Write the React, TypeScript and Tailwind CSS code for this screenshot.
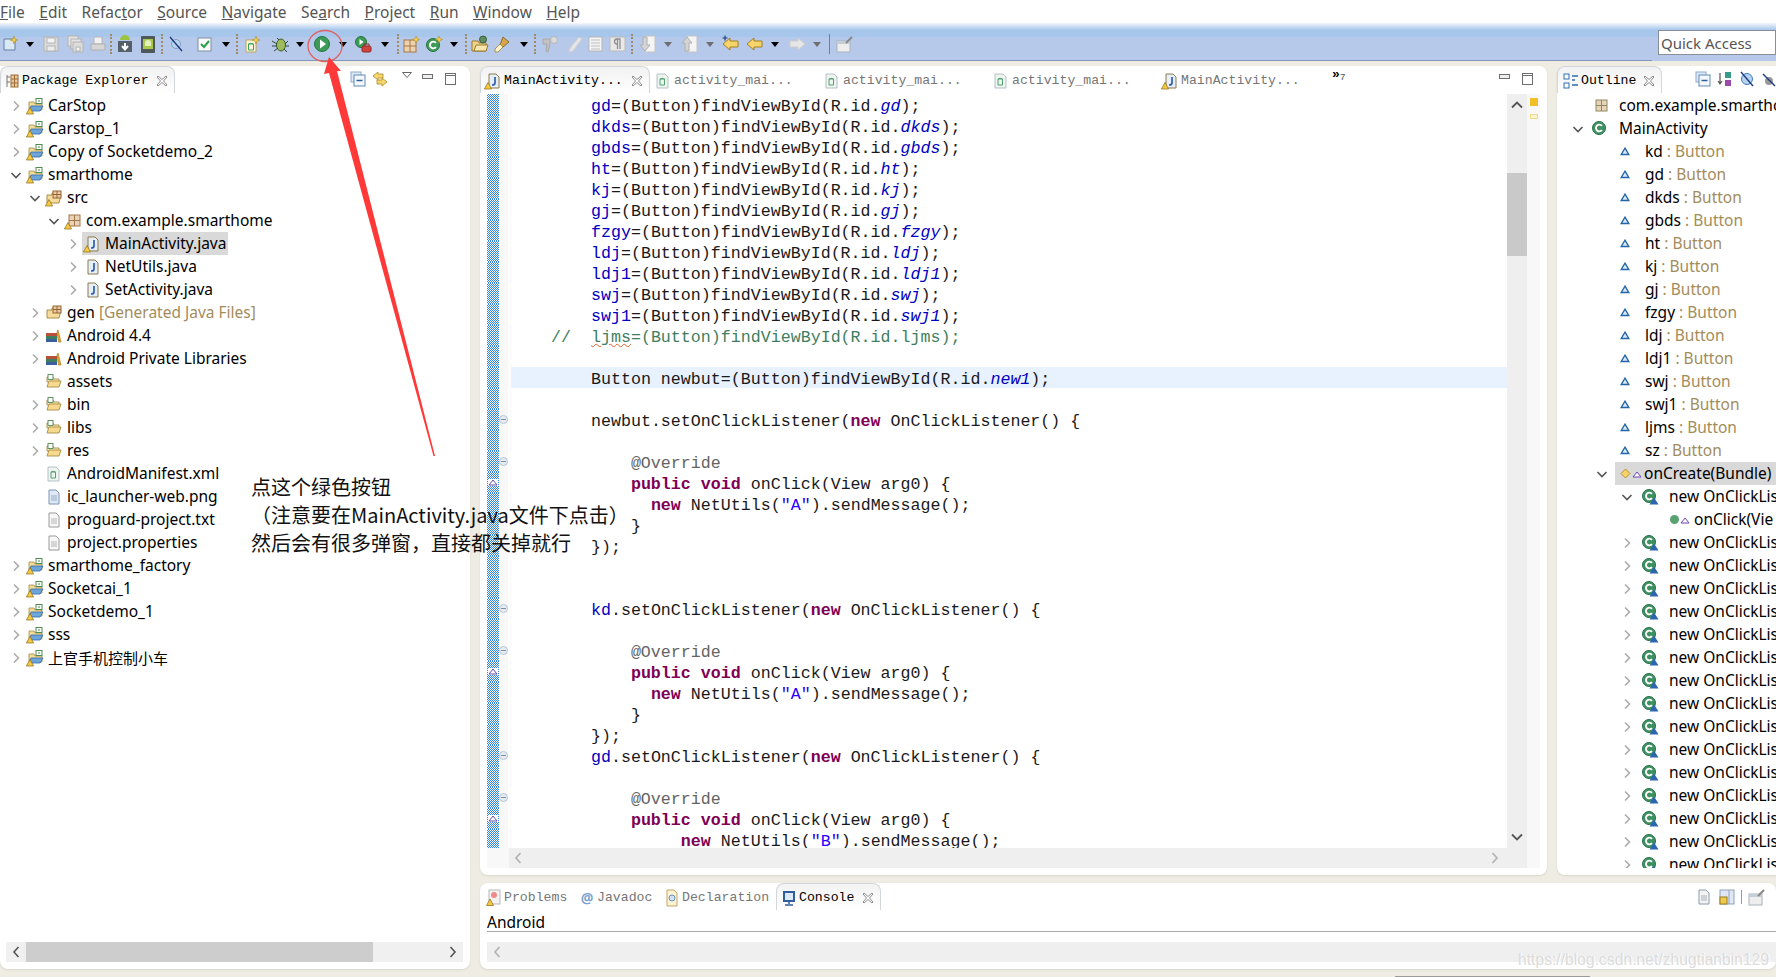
import { ReactNode } from 'react';

const sans = 'font-["Noto_Sans",sans-serif]';
const mono = 'font-["Liberation_Mono",monospace]';

function Warn() {
  return <path d="M4 10.5l3.6 6.5H.4z" fill="#f6c945" stroke="#8a6a10" strokeWidth="0.7" />;
}

function Svg({ children, w = 18, h = 18 }: { children: ReactNode; w?: number; h?: number }) {
  return (
    <svg width={w} height={h} viewBox={`0 0 ${w} ${h}`} className="block shrink-0">
      {children}
    </svg>
  );
}

function ProjectIcon({ warn = true }: { warn?: boolean }) {
  return (
    <Svg>
      <path d="M3 5h5l1 2h7v6H3z" fill="#f3dc9a" stroke="#a58a3f" strokeWidth="0.8" />
      <path d="M5 9h12l-3 5H3z" fill="#6ea6dc" stroke="#2e6aa8" strokeWidth="0.8" />
      <rect x="10" y="1.5" width="6" height="5" fill="#fff" stroke="#4f8a4f" strokeWidth="1" />
      <path d="M12 4h2" stroke="#4f8a4f" />
      {warn && <Warn />}
    </Svg>
  );
}

function PackageIcon({ warn = false, color = '#a5764a' }: { warn?: boolean; color?: string }) {
  return (
    <Svg>
      <rect x="5" y="3" width="11" height="11" fill="#e9d3b8" stroke={color} />
      <path d="M10.5 3v11M5 8.5h11" stroke={color} />
      {warn && <Warn />}
    </Svg>
  );
}

function SrcFolderIcon({ warn = true }: { warn?: boolean }) {
  return (
    <Svg>
      <path d="M2 6h5v-2h5v2h4l-2 8H2z" fill="#f6dc9c" stroke="#a4823a" strokeWidth="0.9" />
      <rect x="8" y="2" width="8" height="7" fill="#e9c9a0" stroke="#8c5a2b" strokeWidth="0.9" />
      <path d="M12 2v7M8 5.5h8" stroke="#8c5a2b" strokeWidth="0.9" />
      {warn && <Warn />}
    </Svg>
  );
}

function FolderIcon() {
  return (
    <Svg>
      <path d="M2 4h6l1 2h5v3H2z" fill="#fbe9b7" stroke="#a88d45" strokeWidth="0.9" />
      <path d="M2 14l2-6h12l-2 6z" fill="#f6d98d" stroke="#a88d45" strokeWidth="0.9" />
      <rect x="3" y="1.5" width="5" height="5" fill="#fff" stroke="#4f8a4f" strokeWidth="0.9" />
    </Svg>
  );
}

function JavaIcon({ warn = false }: { warn?: boolean }) {
  return (
    <Svg>
      <path d="M5 2h7l3 3v11H5z" fill="#e6eefa" stroke="#8d7a4a" />
      <path d="M11 5v6q0 2-3 2" fill="none" stroke="#2f5fa8" strokeWidth="1.7" />
      {warn && <Warn />}
    </Svg>
  );
}

function XmlDocIcon() {
  return (
    <Svg>
      <path d="M3 2h8l3 3v11H3z" fill="#eef5ee" stroke="#b4c0c8" />
      <path d="M6 7h4.5v6H6zM6 7q2-1.500 4.500 0" fill="none" stroke="#55a077" />
    </Svg>
  );
}

function LibraryIcon() {
  return (
    <Svg>
      <rect x="1" y="6" width="11" height="3" fill="#b8503a" />
      <rect x="1" y="9" width="11" height="3" fill="#3e7e5c" />
      <rect x="1" y="12" width="11" height="3" fill="#3a5f9e" />
      <path d="M13 3l3 12h-2.500L12 5z" fill="#e9a92d" stroke="#9c6e12" strokeWidth="0.6" />
    </Svg>
  );
}

function PlainFile({ tint = '#dfe9f5', border = '#7d93b5' }: { tint?: string; border?: string }) {
  return (
    <Svg>
      <path d="M4 2h7l3 3v11H4z" fill={tint} stroke={border} />
      <path d="M6 8h6M6 10h6M6 12h6" stroke={border} strokeWidth="0.7" />
    </Svg>
  );
}

function ClassIcon({ big = false }: { big?: boolean }) {
  return (
    <Svg>
      <circle cx="8" cy="8" r="6.500" fill="#3d9161" stroke="#28724a" />
      <path d="M11 5.800a3.400 3.400 0 1 0 0 4.400" fill="none" stroke="#fff" strokeWidth="1.900" />
      {big && <path d="M13 9.500l4.500 7h-9z" fill="#2c66ae" />}
    </Svg>
  );
}

function FieldTri() {
  return (
    <svg width="10" height="9" viewBox="0 0 10 9" className="block">
      <path d="M5 1.200L8.800 7.500H1.200z" fill="#dbe9f8" stroke="#2466a8" strokeWidth="1.400" />
    </svg>
  );
}

function PurpleTri() {
  return (
    <svg width="10" height="7" viewBox="0 0 10 7" className="block">
      <path d="M5 1L9 6H1z" fill="#fff" stroke="#6a45b0" />
    </svg>
  );
}

function Chevron({ open }: { open?: boolean }) {
  return open ? (
    <svg width="12" height="12" viewBox="0 0 12 12" className="block shrink-0">
      <path d="M1.500 4l4.500 4.500L10.500 4" fill="none" stroke="#555" strokeWidth="1.600" />
    </svg>
  ) : (
    <svg width="12" height="12" viewBox="0 0 12 12" className="block shrink-0">
      <path d="M4 1.500L8.500 6 4 10.500" fill="none" stroke="#ababab" strokeWidth="1.600" />
    </svg>
  );
}

function CloseX() {
  return (
    <svg width="12" height="12" viewBox="0 0 12 12" className="block shrink-0">
      <path d="M2 1l4 3.500L10 1l1 1-3.500 4L11 10l-1 1-4-3.500L2 11l-1-1 3.500-4L1 2z" fill="#fff" stroke="#8f8f8f" />
    </svg>
  );
}

function MinBtn() {
  return <div className="h-[5px] w-[11px] border border-[#6d6d6d] bg-[#eee]" />;
}

function MaxBtn() {
  return (
    <div className="h-[12px] w-[11px] border border-[#6d6d6d] bg-white">
      <div className="h-[2px] border-b border-[#6d6d6d]" />
    </div>
  );
}

function CollapseIcon() {
  return (
    <Svg w={16} h={16}>
      <rect x="1" y="1" width="10" height="10" fill="#dfe9f5" stroke="#8fa9c9" />
      <rect x="4" y="4" width="11" height="11" fill="#f4f8fc" stroke="#5f8ab8" />
      <path d="M6.500 9.500h6" stroke="#2f5f98" strokeWidth="1.500" />
    </Svg>
  );
}

// toolbar icons
const Drop = ({ off }: { off?: boolean }) => (
  <svg width="8" height="5" viewBox="0 0 8 5" className="block shrink-0">
    <path d="M0 0h8L4 5z" fill={off ? '#6e6e6e' : '#000'} />
  </svg>
);

const Dots = () => <div className="h-[20px] w-[2px] border-l-2 border-dotted border-[#a08c62]" />;

const IconNew = () => (
  <Svg>
    <path d="M2 4h11v11H2z" fill="#dbe8f6" stroke="#5f7ea6" />
    <path d="M12 1l1 3 3 1-3 1-1 3-1-3-3-1 3-1z" fill="#f6cf4b" stroke="#a78514" strokeWidth="0.5" />
  </Svg>
);
const IconSave = () => (
  <Svg>
    <path d="M2 2h14v14H2z" fill="#dcdcdc" stroke="#b4b4b4" />
    <rect x="5" y="3" width="8" height="5" fill="#f4f4f4" stroke="#b4b4b4" />
    <rect x="5" y="11" width="8" height="5" fill="#ececec" stroke="#b4b4b4" />
  </Svg>
);
const IconSaveAll = () => (
  <Svg>
    <rect x="2" y="1" width="10" height="10" fill="#e4e4e4" stroke="#b4b4b4" />
    <rect x="5" y="4" width="10" height="10" fill="#e4e4e4" stroke="#b4b4b4" />
    <rect x="7" y="7" width="10" height="10" fill="#dcdcdc" stroke="#b4b4b4" />
    <rect x="10" y="12" width="4" height="4" fill="#f3f3f3" stroke="#b4b4b4" />
  </Svg>
);
const IconPrint = () => (
  <Svg>
    <rect x="5" y="2" width="8" height="7" fill="#f1f1f1" stroke="#b8b8b8" />
    <path d="M2 9h14v6H2z" fill="#d6d6d6" stroke="#b0b0b0" />
  </Svg>
);
const IconSdk = () => (
  <Svg>
    <path d="M4 5a5 5 0 0 1 10 0z" fill="#9cc43e" />
    <rect x="2" y="6" width="14" height="11" fill="#55606a" />
    <path d="M9 8v5M6 11l3 3.500 3-3.500" fill="none" stroke="#fff" strokeWidth="2" />
  </Svg>
);
const IconAvd = () => (
  <Svg>
    <rect x="2" y="1" width="14" height="17" rx="1" fill="#51585c" />
    <rect x="4" y="4" width="10" height="10" fill="#a9c94a" />
    <path d="M6 8a3 3 0 0 1 6 0v3H6z" fill="#e4efc0" />
  </Svg>
);
const IconSkip = () => (
  <Svg>
    <circle cx="9" cy="9" r="4.500" fill="#b9d3ee" stroke="#7f9fc4" />
    <path d="M3 2l12 14" stroke="#1d3d80" strokeWidth="1.400" />
  </Svg>
);
const IconTask = () => (
  <Svg>
    <rect x="2" y="3" width="13" height="13" fill="#fafafa" stroke="#7c8fa5" />
    <path d="M5 9l3 3 5-6" fill="none" stroke="#29a04a" strokeWidth="2" />
  </Svg>
);
const IconXml = () => (
  <Svg>
    <path d="M3 5h10v12H3z" fill="#fff5dd" stroke="#bfa35e" />
    <path d="M5.500 9h5v6h-5zM5.500 9q2-1.500 5 0" fill="none" stroke="#3aa65c" />
    <path d="M13 1l1 3 3 1-3 1-1 3-1-3-3-1 3-1z" fill="#f6cf4b" stroke="#a78514" strokeWidth="0.5" />
  </Svg>
);
const IconBug = () => (
  <Svg>
    <ellipse cx="10" cy="10" rx="4.500" ry="6" fill="#9dbb5b" stroke="#3f5f2a" />
    <path d="M1 6l5 3M1 11h5M3 16l4-3M14 9l3-3M15 11h3M13 14l3 3M6 3l2 2" stroke="#30473a" />
  </Svg>
);
const IconRun = () => (
  <Svg>
    <circle cx="9" cy="9" r="7.500" fill="#3d9a57" stroke="#25763e" />
    <path d="M7 4.500L13 9l-6 4.500z" fill="#fff" />
  </Svg>
);
const IconExt = () => (
  <Svg>
    <circle cx="7" cy="7" r="5.500" fill="#3d9a57" stroke="#25763e" />
    <path d="M5.500 4L9.500 7l-4 3z" fill="#fff" />
    <rect x="8" y="11" width="9" height="6" rx="1.500" fill="#d0433f" stroke="#8c2a28" />
    <path d="M10 11V9h5v2" fill="none" stroke="#8c2a28" />
  </Svg>
);
const IconPkg = () => (
  <Svg>
    <rect x="2" y="5" width="12" height="12" fill="#ecd3ae" stroke="#a5764a" />
    <path d="M8 5v12M2 11h12" stroke="#a5764a" />
    <path d="M14 1l1 2.500 2.500 1-2.500 1-1 2.500-1-2.500-2.500-1 2.500-1z" fill="#f6cf4b" stroke="#a78514" strokeWidth="0.5" />
  </Svg>
);
const IconClassNew = () => (
  <Svg>
    <circle cx="8" cy="10" r="6.500" fill="#3d9a57" stroke="#25763e" />
    <path d="M11 7.800a3.400 3.400 0 1 0 0 4.400" fill="none" stroke="#fff" strokeWidth="1.900" />
    <path d="M14 1l1 2.500 2.500 1-2.500 1-1 2.500-1-2.500-2.500-1 2.500-1z" fill="#f6cf4b" stroke="#a78514" strokeWidth="0.5" />
  </Svg>
);
const IconOpen = () => (
  <Svg>
    <path d="M1 6h6l1 2h7v8H1z" fill="#f0d48a" stroke="#9b7a2c" />
    <path d="M3 16l2-6h12l-2 6z" fill="#f9e6ad" stroke="#9b7a2c" />
    <circle cx="12" cy="4.500" r="3.500" fill="#5d8e5e" stroke="#3a5f3c" />
  </Svg>
);
const IconBrush = () => (
  <Svg>
    <path d="M10 2l6 5-6 5-3-2z" fill="#d6a64a" stroke="#8c6c28" />
    <path d="M7 9l3 3-5 5H2v-3z" fill="#fff3c9" stroke="#a9924f" />
  </Svg>
);
const IconTg = () => (
  <Svg>
    <path d="M2 4h7v5l-2 8-2-1 1-7H2z" fill="#c2c2c2" stroke="#a8a8a8" />
    <circle cx="13" cy="5" r="3.500" fill="#dadada" stroke="#b6b6b6" />
  </Svg>
);
const IconPen = () => (
  <Svg>
    <path d="M13 2l3 2-9 12-4 1 1-4z" fill="#e4e4e4" stroke="#cfcfcf" />
  </Svg>
);
const IconDoc = () => (
  <Svg>
    <rect x="3" y="2" width="13" height="14" fill="#f4f4f4" stroke="#b7b7b7" />
    <path d="M5 5h9M5 8h9M5 11h9M5 14h9" stroke="#bfbfbf" />
  </Svg>
);
const IconPara = () => (
  <Svg>
    <rect x="1" y="2" width="15" height="14" fill="#e8e8e8" stroke="#bcbcbc" />
    <path d="M11 4v10M8.500 4v10M11.500 4H8a2.500 2.500 0 0 0 0 5h1" fill="none" stroke="#8f8f8f" strokeWidth="1.300" />
  </Svg>
);
const IconNext = () => (
  <Svg>
    <rect x="7" y="1" width="10" height="16" fill="#f4f4f4" stroke="#c4c4c4" />
    <path d="M5 2v8H2l5 6 5-6H9V2z" fill="#d4d4d4" stroke="#b0b0b0" />
  </Svg>
);
const IconPrev = () => (
  <Svg>
    <rect x="7" y="1" width="10" height="16" fill="#f4f4f4" stroke="#c4c4c4" />
    <path d="M5 16V8H2l5-6 5 6H9v8z" fill="#d4d4d4" stroke="#b0b0b0" />
  </Svg>
);
const ArrowY = ({ star }: { star?: boolean }) => (
  <Svg>
    <path d="M1 9l7-6v3h8v6H8v3z" fill="#f7d469" stroke="#a5801d" />
    {star && <path d="M3 0.500v5M0.500 3h5" stroke="#1d3d80" strokeWidth="1.200" />}
  </Svg>
);
const ArrowRightGray = () => (
  <Svg>
    <path d="M17 9l-7-6v3H2v6h8v3z" fill="#e6e6e6" stroke="#cdcdcd" />
  </Svg>
);
const IconPin = () => (
  <Svg>
    <rect x="1" y="6" width="13" height="11" fill="#eeeeee" stroke="#a9b2bd" />
    <path d="M1 6h13v3H1z" fill="#c5cdd6" />
    <path d="M10 8l6-6" stroke="#888" strokeWidth="2" />
  </Svg>
);

function Tab({ icon, label, active, cls }: { icon: ReactNode; label: string; active?: boolean; cls: string }) {
  return (
    <div
      className={`${cls} flex h-[27px] shrink-0 items-center pt-[2px] ${mono} text-[13.2px] ${
        active
          ? 'rounded-t-lg border-x border-t border-[#d3d7dc] bg-gradient-to-b from-[#f2f2f2] to-white text-black'
          : 'text-[#767676]'
      }`}
    >
      {icon}
      <span className="ml-[2px] whitespace-pre">{label}</span>
      {active && (
        <span className="ml-auto mr-[6px]">
          <CloseX />
        </span>
      )}
    </div>
  );
}

const labelTree = `whitespace-pre ${sans} text-[15.5px] leading-[23px] text-black`;

type TreeItem = {
  level: number;
  arrow?: 'r' | 'd';
  icon: ReactNode;
  label: string;
  suffix?: string;
  selected?: boolean;
  cjk?: boolean;
};

const levelPad = ['pl-[10px]', 'pl-[29px]', 'pl-[48px]', 'pl-[67px]'];

const treeItems: TreeItem[] = [
  { level: 0, arrow: 'r', icon: <ProjectIcon />, label: 'CarStop' },
  { level: 0, arrow: 'r', icon: <ProjectIcon />, label: 'Carstop_1' },
  { level: 0, arrow: 'r', icon: <ProjectIcon />, label: 'Copy of Socketdemo_2' },
  { level: 0, arrow: 'd', icon: <ProjectIcon />, label: 'smarthome' },
  { level: 1, arrow: 'd', icon: <SrcFolderIcon />, label: 'src' },
  { level: 2, arrow: 'd', icon: <PackageIcon warn />, label: 'com.example.smarthome' },
  { level: 3, arrow: 'r', icon: <JavaIcon warn />, label: 'MainActivity.java', selected: true },
  { level: 3, arrow: 'r', icon: <JavaIcon />, label: 'NetUtils.java' },
  { level: 3, arrow: 'r', icon: <JavaIcon />, label: 'SetActivity.java' },
  { level: 1, arrow: 'r', icon: <SrcFolderIcon warn={false} />, label: 'gen', suffix: ' [Generated Java Files]' },
  { level: 1, arrow: 'r', icon: <LibraryIcon />, label: 'Android 4.4' },
  { level: 1, arrow: 'r', icon: <LibraryIcon />, label: 'Android Private Libraries' },
  { level: 1, icon: <FolderIcon />, label: 'assets' },
  { level: 1, arrow: 'r', icon: <FolderIcon />, label: 'bin' },
  { level: 1, arrow: 'r', icon: <FolderIcon />, label: 'libs' },
  { level: 1, arrow: 'r', icon: <FolderIcon />, label: 'res' },
  { level: 1, icon: <XmlDocIcon />, label: 'AndroidManifest.xml' },
  { level: 1, icon: <PlainFile />, label: 'ic_launcher-web.png' },
  { level: 1, icon: <PlainFile tint="#f7f7f7" border="#9a9a9a" />, label: 'proguard-project.txt' },
  { level: 1, icon: <PlainFile tint="#f7f7f7" border="#9a9a9a" />, label: 'project.properties' },
  { level: 0, arrow: 'r', icon: <ProjectIcon />, label: 'smarthome_factory' },
  { level: 0, arrow: 'r', icon: <ProjectIcon />, label: 'Socketcai_1' },
  { level: 0, arrow: 'r', icon: <ProjectIcon />, label: 'Socketdemo_1' },
  { level: 0, arrow: 'r', icon: <ProjectIcon />, label: 'sss' },
  { level: 0, arrow: 'r', icon: <ProjectIcon />, label: '上官手机控制小车', cjk: true },
];

function TreeRow({ item }: { item: TreeItem }) {
  return (
    <div className={`flex h-[23px] items-center ${levelPad[item.level]}`}>
      <div className="w-[12px]">{item.arrow && <Chevron open={item.arrow === 'd'} />}</div>
      <div className={`ml-[3px] flex h-[23px] items-center pr-[2px] ${item.selected ? 'bg-[#d9d9d9]' : ''}`}>
        <div className="ml-[1px] w-[22px]">{item.icon}</div>
        {item.cjk ? (
          <span className='whitespace-pre font-["Noto_Sans_CJK_SC",sans-serif] text-[15px] leading-[23px] text-black'>
            {item.label}
          </span>
        ) : (
          <span className={labelTree}>
            {item.label}
            {item.suffix && <span className="text-[#a38c5c]">{item.suffix}</span>}
          </span>
        )}
      </div>
    </div>
  );
}

const btnIds = ['gd', 'dkds', 'gbds', 'ht', 'kj', 'gj', 'fzgy', 'ldj', 'ldj1', 'swj', 'swj1'];
const fieldNames = ['kd', 'gd', 'dkds', 'gbds', 'ht', 'kj', 'gj', 'fzgy', 'ldj', 'ldj1', 'swj', 'swj1', 'ljms', 'sz'];

function Kw({ children }: { children: ReactNode }) {
  return <span className="font-bold text-[#7f0055]">{children}</span>;
}
function Fld({ children }: { children: ReactNode }) {
  return <span className="text-[#0000c0]">{children}</span>;
}
function Str({ children }: { children: ReactNode }) {
  return <span className="text-[#2a00ff]">{children}</span>;
}

const listener = (name: ReactNode) => (
  <>
    {'    '}
    {name}
    .setOnClickListener(<Kw>new</Kw> OnClickListener() {'{'}
  </>
);
const overrideLine = <span className="text-[#646464]">{'        @Override'}</span>;
const publicLine = (
  <>
    {'        '}
    <Kw>public</Kw> <Kw>void</Kw> onClick(View arg0) {'{'}
  </>
);
const sendLine = (indent: string, s: string) => (
  <>
    {indent}
    <Kw>new</Kw> NetUtils(<Str>"{s}"</Str>).sendMessage();
  </>
);

type CodeLine = { text?: ReactNode; fold?: boolean; over?: boolean; current?: boolean };

const code: CodeLine[] = [
  ...btnIds.map((id) => ({
    text: (
      <>
        {'    '}
        <Fld>{id}</Fld>=(Button)findViewById(R.id.<Fld><i>{id}</i></Fld>);
      </>
    ),
  })),
  {
    text: (
      <span className="text-[#3f7f5f]">
        {'//  '}
        <span className="underline decoration-[#e0602c] decoration-wavy decoration-1">ljms</span>
        =(Button)findViewById(R.id.ljms);
      </span>
    ),
  },
  {},
  {
    current: true,
    text: (
      <>
        {'    '}Button newbut=(Button)findViewById(R.id.<Fld><i>new1</i></Fld>);
      </>
    ),
  },
  {},
  { fold: true, text: listener('newbut') },
  {},
  { fold: true, text: overrideLine },
  { over: true, text: publicLine },
  { text: sendLine('          ', 'A') },
  { text: '        }' },
  { text: '    });' },
  {},
  {},
  { fold: true, text: listener(<Fld>kd</Fld>) },
  {},
  { fold: true, text: overrideLine },
  { over: true, text: publicLine },
  { text: sendLine('          ', 'A') },
  { text: '        }' },
  { text: '    });' },
  { fold: true, text: listener(<Fld>gd</Fld>) },
  {},
  { fold: true, text: overrideLine },
  { over: true, text: publicLine },
  { text: sendLine('             ', 'B') },
];

function CodeRow({ line }: { line: CodeLine }) {
  return (
    <div className="flex h-[21px] shrink-0">
      <div className="flex w-[12px] shrink-0 items-end justify-center bg-[repeating-conic-gradient(#2f83d8_0_25%,#ffffff_0_50%)] bg-[length:2px_2px]">
        {line.over && (
          <div className="mb-[7px] bg-white">
            <PurpleTri />
          </div>
        )}
      </div>
      <div className="flex w-[9px] shrink-0 items-center justify-center bg-[#f8f8f8]">
        {line.fold && (
          <div className="-ml-[1px] flex h-[9px] w-[9px] shrink-0 items-center justify-center rounded-full border border-[#b9c6d4] bg-[#e6ecf3]">
            <div className="h-[1px] w-[5px] bg-[#7d8ea1]" />
          </div>
        )}
      </div>
      <div
        className={`ml-[3px] flex-1 whitespace-pre pl-[40px] pt-[1.5px] ${mono} text-[16.65px] leading-[21px] text-[#1a1a1a] ${
          line.current ? 'bg-[#e8f2fe]' : ''
        }`}
      >
        {line.text}
      </div>
    </div>
  );
}

function OutlineLabel({ children }: { children: ReactNode }) {
  return <span className={labelTree}>{children}</span>;
}

function NewListenerRow({ open }: { open?: boolean }) {
  return (
    <div className="flex h-[23px] shrink-0 items-center pl-[64px]">
      <div className="w-[20px] shrink-0">
        <Chevron open={open} />
      </div>
      <div className="w-[28px] shrink-0">
        <ClassIcon big />
      </div>
      <OutlineLabel>new OnClickLis</OutlineLabel>
    </div>
  );
}

export default function App() {
  const menus: [string, string, string][] = [
    ['', 'F', 'ile'],
    ['', 'E', 'dit'],
    ['Refac', 't', 'or'],
    ['', 'S', 'ource'],
    ['', 'N', 'avigate'],
    ['Se', 'a', 'rch'],
    ['', 'P', 'roject'],
    ['', 'R', 'un'],
    ['', 'W', 'indow'],
    ['', 'H', 'elp'],
  ];

  return (
    <div className="relative flex h-[977px] w-[1776px] flex-col overflow-hidden bg-[#efece3]">
      {/* menu bar */}
      <div className={`flex h-[23px] shrink-0 items-center gap-[14.500px] bg-white pt-[2px] ${sans} text-[15.500px] text-[#555]`}>
        {menus.map(([a, b, c]) => (
          <span key={a + b + c}>
            {a}
            <u>{b}</u>
            {c}
          </span>
        ))}
      </div>

      {/* toolbar */}
      <div className="flex h-[38px] shrink-0 bg-[linear-gradient(#f3f6fb_0,#a6c6ec_7px,#a6c6ec_14px,#b6c9ea_14px,#b6c9ea_100%)]">
        <div className="flex flex-1 items-center border-b border-[#7f96bd] pl-[2px] pt-[5px]">
          <IconNew />
          <div className="ml-[6px]"><Drop /></div>
          <div className="ml-[8px]"><IconSave /></div>
          <div className="ml-[6px]"><IconSaveAll /></div>
          <div className="ml-[5px]"><IconPrint /></div>
          <div className="ml-[3px]"><Dots /></div>
          <div className="ml-[4px]"><IconSdk /></div>
          <div className="ml-[5px]"><IconAvd /></div>
          <div className="ml-[4px]"><Dots /></div>
          <div className="ml-[4px]"><IconSkip /></div>
          <div className="ml-[11px]"><IconTask /></div>
          <div className="ml-[8px]"><Drop /></div>
          <div className="ml-[6px]"><Dots /></div>
          <div className="ml-[5px]"><IconXml /></div>
          <div className="ml-[10px]"><IconBug /></div>
          <div className="ml-[7px]"><Drop /></div>
          <div className="ml-[9px]"><IconRun /></div>
          <div className="ml-[8px]"><Drop /></div>
          <div className="ml-[7px]"><IconExt /></div>
          <div className="ml-[9px]"><Drop /></div>
          <div className="ml-[8px]"><Dots /></div>
          <div className="ml-[3px]"><IconPkg /></div>
          <div className="ml-[5px]"><IconClassNew /></div>
          <div className="ml-[7px]"><Drop /></div>
          <div className="ml-[7px]"><Dots /></div>
          <div className="ml-[4px]"><IconOpen /></div>
          <div className="ml-[4px]"><IconBrush /></div>
          <div className="ml-[9px]"><Drop /></div>
          <div className="ml-[6px]"><Dots /></div>
          <div className="ml-[5px]"><IconTg /></div>
          <div className="ml-[7px]"><IconPen /></div>
          <div className="ml-[2px]"><IconDoc /></div>
          <div className="ml-[5px]"><IconPara /></div>
          <div className="ml-[4px]"><Dots /></div>
          <div className="ml-[5px]"><IconNext /></div>
          <div className="ml-[8px]"><Drop off /></div>
          <div className="ml-[8px]"><IconPrev /></div>
          <div className="ml-[8px]"><Drop off /></div>
          <div className="ml-[8px]"><ArrowY star /></div>
          <div className="ml-[6px]"><ArrowY /></div>
          <div className="ml-[7px]"><Drop /></div>
          <div className="ml-[9px]"><ArrowRightGray /></div>
          <div className="ml-[7px]"><Drop off /></div>
          <div className="ml-[8px] h-[20px] w-[1px] bg-[#6f7f95]" />
          <div className="ml-[6px]"><IconPin /></div>
        </div>
        <div className="flex w-[124px] shrink-0 items-start pl-[6px] pt-[7px]">
          <div className={`flex h-[25px] w-[118px] items-center border border-[#8a8f96] bg-white pl-[2px] pt-[1px] ${sans} text-[15px] text-[#555]`}>
            Quick Access
          </div>
        </div>
      </div>

      {/* workbench */}
      <div className="flex min-h-0 flex-1 gap-[10px] pb-[8px] pt-[5px]">
        {/* package explorer */}
        <div className="flex w-[470px] shrink-0 flex-col rounded-b-lg rounded-tr-lg bg-white shadow-[0_1px_2px_#d8d5cb]">
          <div className="flex h-[28px] shrink-0 items-start">
            <Tab
              cls="w-[175px] pl-[3px]"
              active
              label="Package Explorer"
              icon={
                <Svg w={16} h={16}>
                  <path d="M3 2v12M3 4h3M3 9h3" stroke="#777" />
                  <rect x="7" y="2" width="7" height="12" fill="#e9c9a0" stroke="#9c6a35" />
                  <path d="M7 6h7M7 10h7M10.500 2v12" stroke="#9c6a35" />
                </Svg>
              }
            />
            <div className="ml-auto flex items-center pr-[14px] pt-[5px]">
              <CollapseIcon />
              <div className="ml-[6px]">
                <Svg w={16} h={16}>
                  <path d="M1 5l5-4v2h5v4H6v2zM15 11l-5-4v2H5v4h5v2z" fill="#f5d66f" stroke="#b08a22" strokeWidth="0.8" />
                </Svg>
              </div>
              <div className="mb-[8px] ml-[14px]">
                <svg width="10" height="6" viewBox="0 0 10 6" className="block">
                  <path d="M.5.500h9L5 5.500z" fill="#fff" stroke="#666" />
                </svg>
              </div>
              <div className="mb-[6px] ml-[10px]"><MinBtn /></div>
              <div className="ml-[12px]"><MaxBtn /></div>
            </div>
          </div>
          <div className="min-h-0 flex-1">
            {treeItems.map((item) => (
              <TreeRow key={item.label} item={item} />
            ))}
          </div>
          <div className="mb-[7px] ml-[6px] mr-[7px] flex h-[20px] shrink-0 items-center bg-[#f0f0f0]">
            <div className="flex w-[20px] justify-center">
              <svg width="8" height="12" viewBox="0 0 8 12" className="block">
                <path d="M6.500 1L2 6l4.500 5" fill="none" stroke="#555" strokeWidth="1.600" />
              </svg>
            </div>
            <div className="h-full w-[347px] bg-[#cdcdcd]" />
            <div className="ml-auto flex w-[20px] justify-center">
              <svg width="8" height="12" viewBox="0 0 8 12" className="block">
                <path d="M1.500 1L6 6l-4.500 5" fill="none" stroke="#555" strokeWidth="1.600" />
              </svg>
            </div>
          </div>
        </div>

        {/* right column */}
        <div className="flex min-w-0 flex-1 flex-col gap-[8px]">
          <div className="flex h-[809px] shrink-0 gap-[10px]">
            {/* editor */}
            <div className="flex w-[1067px] shrink-0 flex-col rounded-b-lg rounded-t-lg bg-white px-[7px] pb-[7px] shadow-[0_1px_2px_#d8d5cb]">
              <div className="-mx-[7px] flex h-[28px] shrink-0 items-start">
                <Tab cls="w-[170px] pl-[3px]" active label="MainActivity..." icon={<JavaIcon warn />} />
                <Tab cls="w-[169px] pl-[4px]" label="activity_mai..." icon={<XmlDocIcon />} />
                <Tab cls="w-[169px] pl-[4px]" label="activity_mai..." icon={<XmlDocIcon />} />
                <Tab cls="w-[169px] pl-[4px]" label="activity_mai..." icon={<XmlDocIcon />} />
                <Tab cls="w-[169px] pl-[4px]" label="MainActivity..." icon={<JavaIcon warn />} />
                <div className={`ml-[6px] pt-[2px] ${mono} text-[13px] font-bold leading-[14px] text-black`}>
                  »<sub className="font-normal text-[#555]">7</sub>
                </div>
                <div className="ml-auto flex items-center pr-[14px] pt-[7px]">
                  <div className="mb-[6px]"><MinBtn /></div>
                  <div className="ml-[12px]"><MaxBtn /></div>
                </div>
              </div>
              <div className="flex min-h-0 flex-1">
                <div className="min-w-0 flex-1 overflow-hidden">
                  {code.map((line, i) => (
                    <CodeRow key={i} line={line} />
                  ))}
                </div>
                <div className="flex w-[20px] shrink-0 flex-col items-center bg-[#efefef]">
                  <svg width="12" height="8" viewBox="0 0 12 8" className="mt-[7px] block">
                    <path d="M1 6.500L6 1.500l5 5" fill="none" stroke="#555" strokeWidth="1.800" />
                  </svg>
                  <div className="mt-[64px] h-[83px] w-full bg-[#c9c9c9]" />
                  <svg width="12" height="8" viewBox="0 0 12 8" className="mb-[7px] mt-auto block">
                    <path d="M1 1.500L6 6.500l5-5" fill="none" stroke="#555" strokeWidth="1.800" />
                  </svg>
                </div>
                <div className="flex w-[13px] shrink-0 flex-col items-center bg-[#f8f8f8] pt-[4px]">
                  <div className="h-[8px] w-[8px] bg-[#f2bf27]" />
                  <div className="mt-[8px] h-[5px] w-[8px] border border-[#f2d98a] bg-[#fdf3cd]" />
                </div>
              </div>
              <div className="flex h-[20px] shrink-0">
                <div className="w-[22px] bg-[#f8f8f8]" />
                <div className="flex flex-1 items-center justify-between bg-[#efefef] pl-[5px] pr-[28px]">
                  <svg width="8" height="12" viewBox="0 0 8 12" className="block">
                    <path d="M6.500 1L2 6l4.500 5" fill="none" stroke="#b5b5b5" strokeWidth="1.800" />
                  </svg>
                  <svg width="8" height="12" viewBox="0 0 8 12" className="block">
                    <path d="M1.500 1L6 6l-4.500 5" fill="none" stroke="#b5b5b5" strokeWidth="1.800" />
                  </svg>
                </div>
                <div className="w-[13px] bg-[#f8f8f8]" />
              </div>
            </div>

            {/* outline */}
            <div className="flex min-w-0 flex-1 flex-col rounded-l-lg bg-white pb-[7px] shadow-[0_1px_2px_#d8d5cb]">
              <div className="flex h-[28px] shrink-0 items-start">
                <Tab
                  cls="w-[105px] pl-[5px]"
                  active
                  label="Outline"
                  icon={
                    <Svg w={16} h={16}>
                      <rect x="1" y="1" width="5" height="5" fill="#fff" stroke="#2c6fb5" />
                      <rect x="1" y="10" width="5" height="5" fill="#fff" stroke="#2c6fb5" />
                      <path d="M9 3h6M9 7h3M9 12h6" stroke="#2c6fb5" strokeWidth="1.400" />
                    </Svg>
                  }
                />
                <div className="ml-[33px] flex items-center gap-[6px] overflow-hidden pt-[5px]">
                  <CollapseIcon />
                  <Svg w={16} h={16}>
                    <path d="M3 2v11M1 10l2 3 2-3" fill="none" stroke="#555" strokeWidth="1.200" />
                    <rect x="8" y="1" width="6" height="6" fill="#3a9a8a" />
                    <rect x="8" y="9" width="6" height="6" fill="#9a4aa8" />
                  </Svg>
                  <Svg w={16} h={16}>
                    <circle cx="8" cy="8" r="5.500" fill="#b9d3ee" stroke="#3c7fc0" />
                    <path d="M2 1l12 14" stroke="#1d3d80" strokeWidth="1.400" />
                  </Svg>
                  <Svg w={16} h={16}>
                    <circle cx="8" cy="10" r="4" fill="#999" />
                    <path d="M2 3l12 12" stroke="#1d3d80" strokeWidth="1.400" />
                  </Svg>
                </div>
              </div>
              <div className="flex min-h-0 flex-1 flex-col overflow-hidden">
                <div className="flex h-[23px] shrink-0 items-center pl-[34px]">
                  <div className="w-[28px] shrink-0">
                    <PackageIcon color="#8c8a62" />
                  </div>
                  <OutlineLabel>com.example.smartho</OutlineLabel>
                </div>
                <div className="flex h-[23px] shrink-0 items-center pl-[15px]">
                  <div className="w-[19px] shrink-0">
                    <Chevron open />
                  </div>
                  <div className="w-[28px] shrink-0">
                    <ClassIcon />
                  </div>
                  <OutlineLabel>MainActivity</OutlineLabel>
                </div>
                {fieldNames.map((name) => (
                  <div key={name} className="flex h-[23px] shrink-0 items-center pl-[63px]">
                    <div className="w-[25px] shrink-0">
                      <FieldTri />
                    </div>
                    <OutlineLabel>
                      {name}
                      <span className="text-[#a38c5c]"> : Button</span>
                    </OutlineLabel>
                  </div>
                ))}
                <div className="flex h-[23px] shrink-0 items-center pl-[39px]">
                  <div className="w-[19px] shrink-0">
                    <Chevron open />
                  </div>
                  <div className="flex h-[23px] flex-1 items-center bg-[#d9d9d9] pl-[5px]">
                    <svg width="11" height="11" viewBox="0 0 11 11" className="block shrink-0">
                      <path d="M5.500 1L10 5.500 5.500 10 1 5.500z" fill="#f7d26e" stroke="#b8902a" />
                    </svg>
                    <div className="ml-[1px] mr-[2px] mt-[2px] shrink-0">
                      <PurpleTri />
                    </div>
                    <OutlineLabel>onCreate(Bundle)</OutlineLabel>
                  </div>
                </div>
                <NewListenerRow open />
                <div className="flex h-[23px] shrink-0 items-center pl-[113px]">
                  <div className="h-[9px] w-[9px] shrink-0 rounded-full bg-[#58a36f]" />
                  <div className="ml-[1px] mr-[4px] mt-[2px] shrink-0">
                    <PurpleTri />
                  </div>
                  <OutlineLabel>onClick(Vie</OutlineLabel>
                </div>
                {Array.from({ length: 15 }, (_, i) => (
                  <NewListenerRow key={i} />
                ))}
              </div>
            </div>
          </div>

          {/* console */}
          <div className="flex min-h-0 flex-1 flex-col rounded-b-lg rounded-t-lg bg-white shadow-[0_1px_2px_#d8d5cb]">
            <div className="flex h-[26px] shrink-0 items-start pl-[4px]">
              <Tab
                cls="w-[95px] pl-[2px]"
                label="Problems"
                icon={
                  <Svg w={16} h={18}>
                    <rect x="3" y="1" width="11" height="14" fill="#f2f2f2" stroke="#b9b9b9" />
                    <circle cx="8" cy="6" r="3" fill="#f08a8a" />
                    <path d="M4 10l3.500 6.500H.5z" fill="#f6c945" stroke="#8a6a10" strokeWidth="0.7" />
                  </Svg>
                }
              />
              <Tab
                cls="w-[85px]"
                label="Javadoc"
                icon={<span className={`${sans} w-[16px] text-center text-[14px] font-bold text-[#7ba3cf]`}>@</span>}
              />
              <Tab
                cls="w-[112px]"
                label="Declaration"
                icon={
                  <Svg w={16} h={18}>
                    <path d="M3 1h7l3 3v13H3z" fill="#fff3d6" stroke="#c5a560" />
                    <circle cx="8" cy="9" r="3" fill="#cfe1f2" stroke="#6a93bc" />
                  </Svg>
                }
              />
              <Tab
                cls="w-[105px] pl-[4px]"
                active
                label="Console"
                icon={
                  <Svg w={16} h={16}>
                    <rect x="2" y="1" width="12" height="11" fill="#2f5d9e" />
                    <rect x="4" y="3" width="8" height="7" fill="#dbe8f6" />
                    <path d="M8 12v2M4 15h8" stroke="#2f5d9e" strokeWidth="1.500" />
                  </Svg>
                }
              />
              <div className="ml-auto flex items-center pr-[10px] pt-[5px]">
                <PlainFile tint="#f3f3f3" border="#8e9aa8" />
                <div className="ml-[6px]">
                  <Svg w={16} h={16}>
                    <rect x="1" y="1" width="14" height="14" fill="#e0e7f0" stroke="#8ea3bd" />
                    <path d="M10 1v14" stroke="#8ea3bd" />
                    <rect x="1" y="8" width="7" height="7" fill="#f0c94f" stroke="#9c7a1c" />
                  </Svg>
                </div>
                <div className="ml-[6px] h-[14px] w-[1px] bg-[#9a9a9a]" />
                <div className="ml-[6px]">
                  <IconPin />
                </div>
              </div>
            </div>
            <div className={`ml-[7px] flex h-[23px] shrink-0 items-center border-b border-[#a9a9a9] pt-[5px] ${sans} text-[15.500px] text-black`}>
              Android
            </div>
            <div className="ml-[7px] mt-[10px] flex h-[20px] shrink-0 items-center bg-[#efefef] pl-[6px]">
              <svg width="8" height="12" viewBox="0 0 8 12" className="block">
                <path d="M6.500 1L2 6l4.500 5" fill="none" stroke="#b5b5b5" strokeWidth="1.800" />
              </svg>
            </div>
          </div>
        </div>
      </div>

      {/* status line */}
      <div className="absolute bottom-0 left-[1395px] h-[1px] w-[195px] bg-[#9a9a9a]" />

      {/* annotation drawn over the screen */}
      <svg width="1776" height="977" viewBox="0 0 1776 977" className="pointer-events-none absolute left-0 top-0">
        <ellipse cx="325" cy="46" rx="17" ry="15.500" fill="none" stroke="#e2605f" strokeWidth="1.300" />
        <polygon points="329,57 341,71 337,71 435,456 433.500,456 329,73 324,74" fill="#ff3838" />
      </svg>
      <div className='absolute left-[251px] top-[473px] whitespace-pre font-["Noto_Sans_CJK_SC",sans-serif] text-[20px] leading-[28px] text-[#111]'>
        <div>点这个绿色按钮</div>
        <div>（注意要在MainActivity.java文件下点击）</div>
        <div>然后会有很多弹窗，直接都关掉就行</div>
      </div>
      <div className="absolute left-[1518px] top-[948px] font-['Liberation_Sans',sans-serif] text-[15.700px] text-[#dcdcdc] [text-shadow:1px_0_0_#ffffff]">
        https://blog.csdn.net/zhugtianbin129
      </div>
    </div>
  );
}
